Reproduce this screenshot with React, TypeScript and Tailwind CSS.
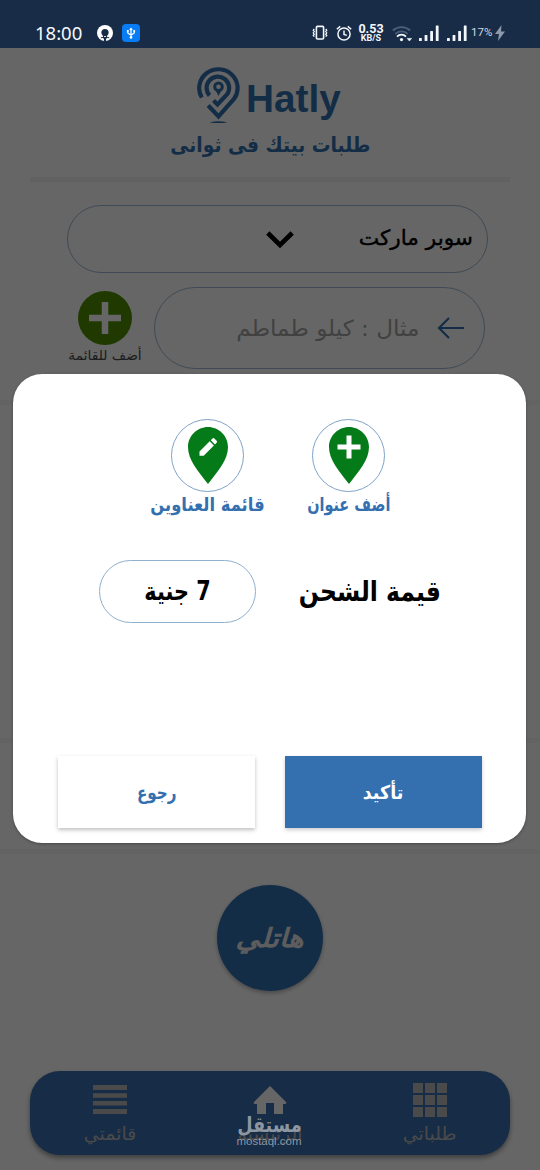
import type { ReactNode } from 'react';
import { clsx } from 'clsx';

interface LabelProps {
  className?: string;
  children: ReactNode;
}

function Label({ className, children }: LabelProps) {
  return <span className={clsx('block shrink-0 whitespace-nowrap', className)}>{children}</span>;
}

function Signal() {
  return (
    <svg viewBox="0 0 20 17" className="h-[17px] w-5" fill="#f4f8fc">
      <rect x="0" y="13" width="2.8" height="3" rx="0.5" />
      <rect x="5.6" y="10" width="2.8" height="6" rx="0.5" />
      <rect x="11.2" y="6" width="2.8" height="10" rx="0.5" />
      <rect x="16.8" y="0.5" width="2.8" height="15.5" rx="0.5" />
    </svg>
  );
}

function StatusBar() {
  return (
    <header
      dir="ltr"
      className="relative z-20 flex h-12 items-center bg-[#182c47] pl-[35px] pt-[18px] text-[#f4f8fc]"
    >
      <span className="w-[62px] font-['Noto_Sans'] text-[18.5px] leading-none">18:00</span>
      <svg viewBox="0 0 16 16" className="h-4 w-4" fill="none">
        <circle cx="8" cy="8" r="8" fill="#fff" />
        <circle cx="8" cy="7.6" r="3.6" fill="#182c47" />
        <path d="M6.5 10.500v3M9.500 10.500v3" stroke="#182c47" strokeWidth="1" />
        <path d="m3.800 12.800 2.500-.6M12.200 12.800l-2.500-.6" stroke="#182c47" strokeWidth="1" />
        <path d="M7 12h2v5H7z" fill="#182c47" />
      </svg>
      <svg viewBox="0 0 18 18" className="ml-[9px] h-[18px] w-[18px]" fill="none">
        <rect width="18" height="18" rx="4" fill="#087cf5" />
        <path d="M9 4.5v9M5.8 7v2L9 11.200 12.200 9V7" stroke="#fff" strokeWidth="1.3" />
        <path d="M7.2 6 9 3.5 10.8 6z" fill="#fff" />
        <circle cx="9" cy="13.4" r="1.3" fill="#fff" />
        <path d="M4.9 6h1.8v1.8H4.9zM11.3 6h1.8v1.8h-1.8z" fill="#fff" />
      </svg>
      <svg viewBox="0 0 16 16" className="ml-[172px] h-4 w-4" fill="none" stroke="#f4f8fc">
        <rect x="4.4" y="1.4" width="7.2" height="12.6" rx="1" strokeWidth="1.6" />
        <path
          d="M2.3 4 1.2 5.2l1.1 1.3-1.1 1.4 1.1 1.3-1.1 1.3 1.1 1.2M13.7 4l1.1 1.2-1.1 1.3 1.1 1.4-1.1 1.3 1.1 1.3-1.1 1.2"
          strokeWidth="1.2"
        />
      </svg>
      <svg viewBox="0 0 16 17" className="ml-2 h-[17px] w-4" fill="none" stroke="#f4f8fc" strokeWidth="1.5">
        <circle cx="8" cy="9" r="6.1" />
        <path d="M8 5.4v4l2.8 1M.8 4.3 4.2 1.4M15.2 4.3l-3.4-2.9" />
      </svg>
      <span className="ml-[7px] flex w-6 flex-col items-center font-[Roboto] font-bold">
        <span className="text-[12.5px] leading-[10px]">0.53</span>
        <span className="text-[9px] leading-[9px]">KB/S</span>
      </span>
      <svg viewBox="0 0 20 17" className="ml-[9px] h-[17px] w-5" fill="none" strokeWidth="1.8">
        <path d="M.8 5.5a13 13 0 0 1 17.4 0" stroke="#4d6079" />
        <path d="M3.3 8.8a9 9 0 0 1 12.4 0" stroke="#4d6079" />
        <path d="M5 11.6a6.3 6.3 0 0 1 9 0" stroke="#f4f8fc" />
        <circle cx="9.5" cy="14.6" r="1.6" fill="#f4f8fc" />
        <path d="m15.200 13.400 2.200 2.600 2.200-2.600z" fill="#f4f8fc" stroke="#f4f8fc" strokeWidth=".6" />
      </svg>
      <span className="ml-[7px] flex gap-2">
        <Signal />
        <Signal />
      </span>
      <span className="ml-[4px] w-[22px] whitespace-nowrap font-[Roboto] text-[11.5px] text-[#cfd7e0]">17%</span>
      <svg viewBox="0 0 10 16" className="ml-[2px] h-4 w-[10px]" fill="#8d99aa">
        <path d="M6.5 0 0 9h4L3 16l7-9.5H6z" />
      </svg>
    </header>
  );
}

function Brand() {
  return (
    <div className="flex h-[129px] flex-col items-center pt-[18px] text-[#3470b0]">
      <div dir="ltr" className="flex h-[58px] w-[146px]">
        <svg viewBox="0 0 43 58" className="h-[58px] w-[43px]" fill="none" stroke="currentColor" strokeWidth="4.2">
          <path d="M4.800 31.500A19.200 18.800 0 1 1 37 33L21.500 50.500 11.200 39.500" />
          <path d="M12.500 29.500A11.300 11.300 0 1 1 30.400 28L20.500 38.500 16.500 34.500" />
          <circle cx="21.5" cy="20.800" r="3.800" strokeWidth="3" />
          <path d="m18.500 24 3 6 3-6z" fill="currentColor" stroke="none" />
          <path d="M12.5 56.4c6-1.6 12-1.6 18 0-6 .8-12 .8-18 0z" fill="currentColor" stroke="none" />
        </svg>
        <span className="ml-[6px] mt-[14px] origin-left scale-x-[1.02] font-['Liberation_Sans'] text-[38px] font-bold leading-[38px]">
          Hatly
        </span>
      </div>
      <Label className="mt-[7px] scale-x-[.89] text-[21px] font-bold leading-[28px]">طلبات بيتك فى ثوانى</Label>
    </div>
  );
}

function OrderForm() {
  return (
    <div className="pt-[23px]">
      <div className="mr-[52px] flex h-[68px] w-[421px] items-center rounded-full border border-[#9db9d6] px-[14px]">
        <Label className="w-[114px] origin-right scale-x-[1.03] text-[21px] [-webkit-text-stroke:.4px_#000]">
          سوبر ماركت
        </Label>
        <svg viewBox="0 0 28 17" className="mr-[65px] h-[17px] w-7" fill="none" stroke="#000" strokeWidth="4.6">
          <path d="m1.8 2 12.2 12L26.2 2" />
        </svg>
      </div>
      <div className="flex pr-[55px] pt-[14px]">
        <div className="flex h-[82px] w-[331px] items-center rounded-full border border-[#9db9d6] pr-[19px]">
          <svg viewBox="0 0 28 22" className="h-[22px] w-7" fill="none" stroke="#3470b0" strokeWidth="2.2">
            <path d="M27 11H2M12 1 2 11l10 10" />
          </svg>
          <Label className="mr-[18px] origin-right scale-x-[1.05] text-[22px] text-[#a3a3a3]">مثال : كيلو طماطم</Label>
        </div>
        <div className="mr-[12px] flex w-[74px] flex-col items-center pt-[4px]">
          <svg viewBox="0 0 54 54" className="h-[54px] w-[54px]">
            <circle cx="27" cy="27" r="27" fill="#4f9000" />
            <path d="M27 11v32M11 27h32" stroke="#fff" strokeWidth="6.5" />
          </svg>
          <Label className="text-[13.8px] leading-[20px] text-[#4a4a4a]">أضف للقائمة</Label>
        </div>
      </div>
    </div>
  );
}

const tabs = [
  {
    text: 'طلباتي',
    icon: (
      <svg viewBox="0 0 34 34" className="h-[34px] w-[34px]" fill="currentColor">
        <path d="M0 0h10v10H0zM12 0h10v10H12zM24 0h10v10H24zM0 12h10v10H0zM12 12h10v10H12zM24 12h10v10H24zM0 24h10v10H0zM12 24h10v10H12zM24 24h10v10H24z" />
      </svg>
    ),
  },
  {
    text: 'الرئيسية',
    icon: (
      <svg viewBox="0 0 34 34" className="h-[34px] w-[34px] text-white" fill="currentColor">
        <path d="M17 3 33 19q1 2-1 2h-2v10h-9V20h-8v11H4V21H2q-2 0-1-2z" />
      </svg>
    ),
  },
  {
    text: 'قائمتي',
    icon: (
      <svg viewBox="0 0 34 34" className="h-[34px] w-[34px]" fill="currentColor">
        <path d="M0 2h34v5H0zM0 10.2h34v4.5H0zM0 18h34v4.5H0zM0 26h34v5H0z" />
      </svg>
    ),
  },
];

function BottomNav() {
  return (
    <nav className="mx-[30px] mt-[80px] flex h-[84px] rounded-[30px] bg-[#3a6eae] shadow-[0_3px_5px_rgba(0,0,0,.4)]">
      {tabs.map((tab) => (
        <div key={tab.text} className="flex w-40 flex-col items-center pt-[12px] text-[#bababa]">
          {tab.icon}
          <Label className="mt-[4px] scale-x-[1.05] text-[18px] leading-[26px]">{tab.text}</Label>
        </div>
      ))}
    </nav>
  );
}

interface AddressActionProps {
  text: string;
  textClass: string;
  children: ReactNode;
}

function AddressAction({ text, textClass, children }: AddressActionProps) {
  return (
    <div className="flex w-[73px] flex-col items-center">
      <div className="flex h-[73px] w-[73px] justify-center rounded-full border border-[#7fa3c9] pt-[7px]">
        <svg viewBox="0 0 40 57" className="h-[57px] w-10">
          <path d="M20 0C9 0 0 9 0 20c0 13 10 24 20 37 10-13 20-24 20-37C40 9 31 0 20 0z" fill="#047a18" />
          {children}
        </svg>
      </div>
      <Label className={clsx('text-[19px] font-bold leading-[24px] text-[#3470b0]', textClass)}>{text}</Label>
    </div>
  );
}

function ConfirmDialog() {
  return (
    <section className="absolute left-[13px] top-[374px] z-20 h-[469px] w-[513px] rounded-[29px] bg-white shadow-[0_1px_3px_rgba(0,0,0,.3)]">
      <div className="flex gap-[68px] pr-[141px] pt-[45px]">
        <AddressAction text="أضف عنوان" textClass="scale-x-[.76]">
          <path d="M20 8.5v23M8.5 20h23" stroke="#fff" strokeWidth="5" />
        </AddressAction>
        <AddressAction text="قائمة العناوين" textClass="scale-x-[.86]">
          <path
            d="m11.500 24.500 10.200-10.200 4.200 4.200L15.700 28.700h-4.200zM22.800 13.200l1.600-1.600q1-1 2 0l2.200 2.200q1 1 0 2l-1.600 1.600z"
            fill="#fff"
          />
        </AddressAction>
      </div>
      <div className="flex items-center pr-[85px] pt-[44px]">
        <Label className="w-[142px] origin-right scale-x-[.84] text-[28px] font-bold leading-[36px]">قيمة الشحن</Label>
        <div className="mr-[43px] flex h-[63px] w-[157px] items-center justify-center rounded-full border border-[#8eb0cf]">
          <Label className="scale-x-[.8] text-[26px] font-bold">7 جنية</Label>
        </div>
      </div>
      <div className="flex gap-[30px] pr-[44px] pt-[133px]">
        <button className="flex h-[72px] w-[197px] items-center justify-center bg-[#3470b0] shadow-[0_2px_4px_rgba(0,0,0,.2)]">
          <Label className="scale-x-[.92] text-[19px] font-bold text-white">تأكيد</Label>
        </button>
        <button className="flex h-[72px] w-[197px] items-center justify-center bg-white shadow-[0_2px_4px_rgba(0,0,0,.25)]">
          <Label className="scale-x-[.8] text-[19px] font-bold text-[#3470b0]">رجوع</Label>
        </button>
      </div>
    </section>
  );
}

function Watermark() {
  return (
    <div className="absolute left-[229px] top-[1111px] z-20 flex w-20 flex-col items-center text-[#9da5b0]/90">
      <Label className="scale-x-[.84] text-[21px] font-bold leading-[28px]">مستقل</Label>
      <span className="-mt-[4px] font-['Liberation_Sans'] text-[11.5px] leading-[12px]">mostaql.com</span>
    </div>
  );
}

export default function App() {
  return (
    <div
      dir="rtl"
      lang="ar"
      className="relative h-[1170px] w-[540px] overflow-hidden bg-white font-['DejaVu_Sans',sans-serif] text-black"
    >
      <StatusBar />
      <Brand />
      <div className="mx-[30px] h-[5px] bg-[#f2f2f2]" />
      <OrderForm />
      <div className="mt-[31px] h-[5px] bg-[#f8f8f8]" />
      <div className="mt-[333px] h-[5px] bg-[#f8f8f8]" />
      <div className="mt-[106px] h-[5px] bg-[#f8f8f8]" />
      <div className="mx-auto mt-[31px] flex h-[106px] w-[106px] items-center justify-center rounded-full bg-[#3470b0] shadow-[0_2px_4px_rgba(0,0,0,.3)]">
        <Label className="scale-x-[1.15] text-[26px] font-bold italic text-[#e8e8e8]">هاتلي</Label>
      </div>
      <BottomNav />
      <div className="absolute inset-0 z-10 bg-black/60" />
      <ConfirmDialog />
      <Watermark />
    </div>
  );
}
